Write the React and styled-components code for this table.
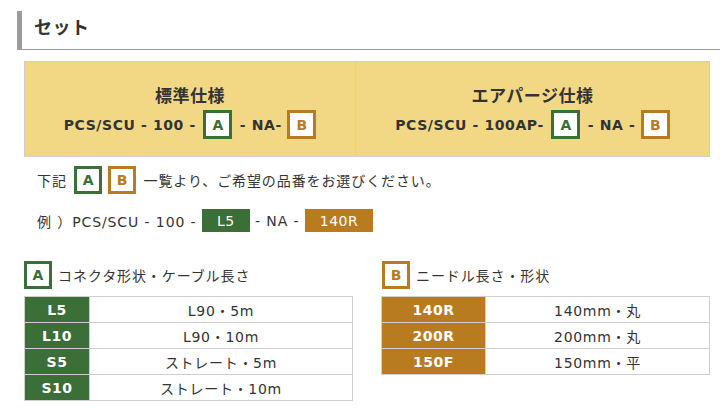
import React from "react";
import styled, { createGlobalStyle } from "styled-components";

const GREEN = "#3c6e37";
const ORANGE = "#b97b20";
const FONT = `"DejaVu Sans", "Noto Sans CJK JP", sans-serif`;

const Global = createGlobalStyle`
  html, body { margin: 0; padding: 0; background: #fff; }
  body { font-family: ${FONT}; color: #333; font-size: 14px; }
`;

const Page = styled.div`
  padding-left: 17px;
  width: 703px;
`;

const Heading = styled.h2`
  margin: 11px 0 0;
  border-left: 5px solid #9c9c9c;
  border-bottom: 1px solid #9c9c9c;
  padding: 6px 12px 10px;
  font-size: 18px;
  line-height: 22px;
  font-weight: bold;
  color: #333;
  letter-spacing: 0.5px;
`;

const Content = styled.div`
  margin-left: 7px;
  width: 686px;
`;

const SpecBox = styled.div`
  margin-top: 11px;
  display: grid;
  grid-template-columns: 330px 1fr;
  background: #f2d885;
  border: 1px solid #cfcfcf;
`;

const SpecCell = styled.div`
  display: flex;
  flex-direction: column;
  align-items: center;
  padding: 22px 0 17px;
  border-left: ${(p) => (p.$divided ? "1px solid #cfcfcf" : "none")};
`;

const SpecTitle = styled.div`
  font-size: 17px;
  line-height: 24px;
  font-weight: bold;
  color: #333;
  margin-bottom: 2px;
  letter-spacing: 0.5px;
`;

const CodeRow = styled.div`
  display: flex;
  align-items: center;
  font-size: 14px;
  font-weight: bold;
  color: #333;
  white-space: pre;
  height: 29px;
  letter-spacing: 0.6px;
`;

const LetterBox = styled.span`
  display: inline-flex;
  align-items: center;
  justify-content: center;
  box-sizing: border-box;
  width: ${(p) => p.$size}px;
  height: ${(p) => p.$size}px;
  border: 3px solid ${(p) => p.$color};
  background: #fff;
  color: ${(p) => p.$color};
  font-weight: bold;
  font-size: 14px;
  letter-spacing: 0;
  margin: ${(p) => p.$margin || "0"};
`;

const Line = styled.div`
  display: flex;
  align-items: center;
  padding-left: 13px;
  font-size: 14px;
  color: #333;
  white-space: pre;
  letter-spacing: 0.9px;
  margin-top: ${(p) => p.$mt}px;
`;

const Chip = styled.span`
  display: inline-flex;
  align-items: center;
  height: 23px;
  padding: 0 15px;
  background: ${(p) => p.$color};
  color: #fff;
  font-size: 14px;
  letter-spacing: 0.5px;
`;

const Columns = styled.div`
  display: grid;
  grid-template-columns: 329px 329px;
  column-gap: 28px;
  margin-top: 29px;
`;

const Section = styled.div`
  display: flex;
  flex-direction: column;
`;

const SectionLabel = styled.div`
  display: flex;
  align-items: center;
  gap: 6px;
  font-size: 14px;
  color: #333;
  height: 28px;
  letter-spacing: 0.9px;
  margin-left: ${(p) => p.$indent || 0}px;
`;

const Table = styled.table`
  margin-top: 7px;
  border-collapse: collapse;
  width: 100%;
`;

const Th = styled.th`
  width: ${(p) => p.$w}px;
  background: ${(p) => p.$color};
  color: #fff;
  font-weight: bold;
  font-size: 14px;
  height: 25px;
  padding: 0;
  letter-spacing: 0.5px;
  border: 1px solid #cfcfcf;
  text-align: center;
`;

const Td = styled.td`
  border: 1px solid #cfcfcf;
  text-align: center;
  font-size: 14px;
  color: #333;
  height: 25px;
  padding: 0;
  letter-spacing: 0.7px;
`;

const tableA = [
  ["L5", "L90・5m"],
  ["L10", "L90・10m"],
  ["S5", "ストレート・5m"],
  ["S10", "ストレート・10m"],
];
const tableB = [
  ["140R", "140mm・丸"],
  ["200R", "200mm・丸"],
  ["150F", "150mm・平"],
];

export default function App() {
  return (
    <Page>
      <Global />
      <Heading>セット</Heading>
      <Content>
        <SpecBox>
          <SpecCell>
            <SpecTitle>標準仕様</SpecTitle>
            <CodeRow>
              {"PCS/SCU - 100 - "}
              <LetterBox $size={29} $color={GREEN} $margin="0 2px 0 2px">A</LetterBox>
              {" - NA- "}
              <LetterBox $size={29} $color={ORANGE}>B</LetterBox>
            </CodeRow>
          </SpecCell>
          <SpecCell $divided>
            <SpecTitle>エアパージ仕様</SpecTitle>
            <CodeRow>
              {"PCS/SCU - 100AP- "}
              <LetterBox $size={29} $color={GREEN} $margin="0 2px 0 2px">A</LetterBox>
              {" - NA - "}
              <LetterBox $size={29} $color={ORANGE}>B</LetterBox>
            </CodeRow>
          </SpecCell>
        </SpecBox>

        <Line $mt={9}>
          {"下記 "}
          <LetterBox $size={28} $color={GREEN} $margin="0 6px 0 2px">A</LetterBox>
          <LetterBox $size={28} $color={ORANGE} $margin="0 2px 0 0">B</LetterBox>
          {" 一覧より、ご希望の品番をお選びください。"}
        </Line>

        <Line $mt={15}>
          {"例 ）PCS/SCU - 100 - "}
          <Chip $color={GREEN}>L5</Chip>
          {" - NA - "}
          <Chip $color={ORANGE}>140R</Chip>
        </Line>

        <Columns>
          <Section>
            <SectionLabel>
              <LetterBox $size={28} $color={GREEN}>A</LetterBox>
              コネクタ形状・ケーブル長さ
            </SectionLabel>
            <Table>
              <tbody>
                {tableA.map(([k, v]) => (
                  <tr key={k}>
                    <Th $w={64} $color={GREEN}>{k}</Th>
                    <Td>{v}</Td>
                  </tr>
                ))}
              </tbody>
            </Table>
          </Section>
          <Section>
            <SectionLabel $indent={1}>
              <LetterBox $size={28} $color={ORANGE}>B</LetterBox>
              ニードル長さ・形状
            </SectionLabel>
            <Table>
              <tbody>
                {tableB.map(([k, v]) => (
                  <tr key={k}>
                    <Th $w={103} $color={ORANGE}>{k}</Th>
                    <Td>{v}</Td>
                  </tr>
                ))}
              </tbody>
            </Table>
          </Section>
        </Columns>
      </Content>
    </Page>
  );
}
